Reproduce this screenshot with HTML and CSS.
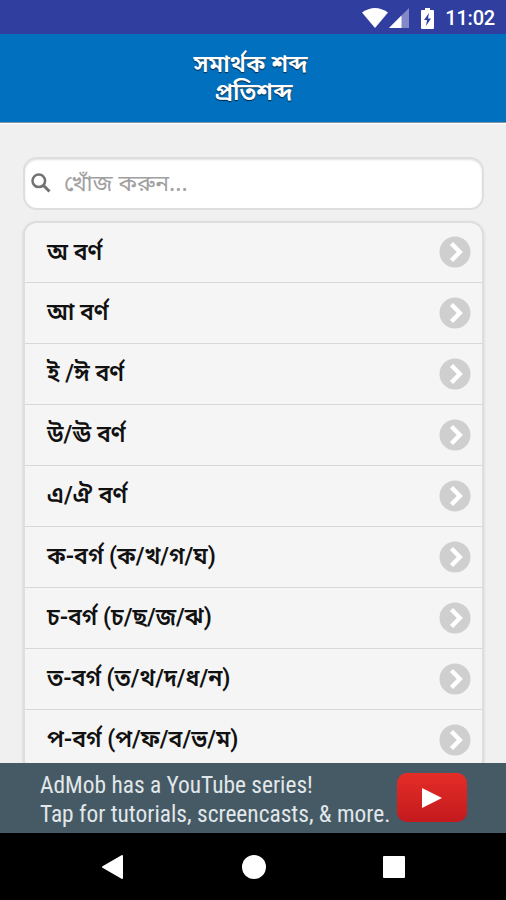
FILE: index.html
```html
<!DOCTYPE html>
<html lang="bn">
<head>
  <meta charset="utf-8">
  <title>সমার্থক শব্দ প্রতিশব্দ</title>
  <link rel="stylesheet" href="styles.css">
</head>
<body>
  <svg class="defs" width="0" height="0">
    <symbol id="arrow" viewBox="0 0 32 32">
      <circle cx="16" cy="16" r="15.5" fill="#cfcfcf"/>
      <path d="M12.5 7.5l8.3 8.500-8.3 8.500" fill="none" stroke="#fff" stroke-width="4.4"/>
    </symbol>
  </svg>

  <div class="status">
    <svg class="wifi" width="26" height="20" viewBox="0 0 26 20">
      <path d="M0 4.5Q13-4.5 26 4.5L13 20z" fill="#fff"/>
    </svg>
    <svg class="signal" width="20" height="20" viewBox="0 0 20 20">
      <path d="M20 0v20H0z" fill="#8189c6"/>
      <path d="M12.5 7.5V20H0z" fill="#fff"/>
    </svg>
    <svg class="battery" width="13" height="21" viewBox="0 0 13 21">
      <path d="M4 0h5v2h3q1 0 1 1v17q0 1-1 1H1q-1 0-1-1V3q0-1 1-1h3z" fill="#fff"/>
      <path d="M8 5l-5 7h3l-1 6 5-7.5H7z" fill="#303f9f"/>
    </svg>
    <span class="time">11:02</span>
  </div>

  <header class="header">
    <h1><span>সমার্থক শব্দ</span><span>প্রতিশব্দ</span></h1>
  </header>

  <main class="content">
    <div class="search">
      <svg width="20" height="20" viewBox="0 0 20 20" fill="none" stroke="#727272">
        <circle cx="7.8" cy="7.8" r="6.3" stroke-width="2.5"/>
        <path d="M12 12l6.5 6.5" stroke-width="3"/>
      </svg>
      <span>খোঁজ করুন...</span>
    </div>

    <ul class="list">
      <li><span>অ বর্ণ</span><svg><use href="#arrow"/></svg></li>
      <li><span>আ বর্ণ</span><svg><use href="#arrow"/></svg></li>
      <li><span>ই /ঈ বর্ণ</span><svg><use href="#arrow"/></svg></li>
      <li><span>উ/ঊ বর্ণ</span><svg><use href="#arrow"/></svg></li>
      <li><span>এ/ঐ বর্ণ</span><svg><use href="#arrow"/></svg></li>
      <li><span>ক-বর্গ (ক/খ/গ/ঘ)</span><svg><use href="#arrow"/></svg></li>
      <li><span>চ-বর্গ (চ/ছ/জ/ঝ)</span><svg><use href="#arrow"/></svg></li>
      <li><span>ত-বর্গ (ত/থ/দ/ধ/ন)</span><svg><use href="#arrow"/></svg></li>
      <li><span>প-বর্গ (প/ফ/ব/ভ/ম)</span><svg><use href="#arrow"/></svg></li>
    </ul>
  </main>

  <div class="ad">
    <p><span>AdMob has a YouTube series!</span><span>Tap for tutorials, screencasts, &amp; more.</span></p>
    <div class="play">
      <svg width="20" height="20" viewBox="0 0 20 20"><path d="M0 0l20 10L0 20z" fill="#fff"/></svg>
    </div>
  </div>

  <nav class="nav">
    <svg width="22" height="24" viewBox="0 0 22 24"><path d="M20 1v22L1 12z" fill="#fff" stroke="#fff" stroke-width="2" stroke-linejoin="round"/></svg>
    <svg width="24" height="24" viewBox="0 0 24 24"><circle cx="12" cy="12" r="12" fill="#fff"/></svg>
    <svg width="22" height="22" viewBox="0 0 22 22"><rect width="22" height="22" rx="1" fill="#fff"/></svg>
  </nav>
</body>
</html>
```
FILE: styles.css
```css
body {
  margin: 0;
  height: 900px;
  display: flex;
  flex-direction: column;
  overflow: hidden;
  background-color: #f0f0f0;
  font-family: "Noto Sans Bengali", "Noto Sans", sans-serif;
}

.defs {
  display: none;
}

.status {
  height: 34px;
  box-sizing: border-box;
  display: flex;
  align-items: center;
  justify-content: flex-end;
  padding: 2px 11px 0 0;
  background-color: #303f9f;
  color: #fff;
  font-family: Roboto, sans-serif;
  font-size: 20px;
  font-weight: 500;
}

.time {
  letter-spacing: -0.2px;
}

.signal {
  margin-left: 1px;
}

.battery {
  margin: 0 11px 0 12px;
}

.header {
  height: 89px;
  box-sizing: border-box;
  background-color: #0070bf;
  border-bottom: 1px solid #8797a5;
  box-shadow: 0 1px 1px #fff;
  flex-shrink: 0;
}

h1 {
  margin: 0;
  padding: 18px 5px 0 0;
  text-align: center;
  color: #fff;
  font-size: 23.8px;
  font-weight: 600;
  line-height: 28px;
  text-shadow: 0 1px 1px rgba(0, 0, 0, 0.7);
}

h1 span {
  display: block;
}

h1 span:last-child {
  padding-left: 6px;
}

.content {
  flex: 1;
  min-height: 0;
  overflow: hidden;
  padding: 34px 22px 0 23px;
}

.search {
  height: 53px;
  box-sizing: border-box;
  display: flex;
  align-items: center;
  padding: 0 0 1px 6px;
  background-color: #fff;
  border: 2px solid #dedede;
  border-radius: 14px;
  box-shadow: inset 0 1px 2px rgba(0, 0, 0, 0.12);
  color: #a0a0a0;
  font-size: 23px;
}

.search span {
  margin-left: 13px;
  padding-top: 3px;
}

.list {
  list-style: none;
  margin: 11px 0 0;
  padding: 0;
  background-color: #f5f5f5;
  border: 2px solid #dedede;
  border-radius: 14px;
  box-shadow: 0 1px 3px rgba(0, 0, 0, 0.12);
}

.list li {
  height: 61px;
  box-sizing: border-box;
  display: flex;
  align-items: center;
  justify-content: space-between;
  padding: 0 11px 1px 22px;
  border-bottom: 1px solid #d8d8d8;
  color: #111;
  font-family: Roboto, "Noto Sans Bengali", sans-serif;
  font-size: 23px;
  font-weight: 600;
}

.list li:first-child {
  height: 60px;
}

.list span {
  padding-top: 3px;
}

.list svg {
  width: 32px;
  height: 32px;
}

.ad {
  height: 70px;
  flex-shrink: 0;
  display: flex;
  align-items: center;
  justify-content: space-between;
  padding: 0 39px 0 40px;
  background-color: #455a64;
  color: #e1e7ea;
  font-family: Roboto, sans-serif;
  font-size: 23.4px;
  font-stretch: 75%;
  line-height: 29px;
}

.ad p {
  margin: 0;
  padding-top: 3px;
  white-space: nowrap;
}

.ad p span {
  display: block;
}

.play {
  width: 70px;
  height: 49px;
  margin-bottom: 1px;
  display: flex;
  align-items: center;
  justify-content: center;
  background: linear-gradient(#e52d27, #c31a1e);
  border-radius: 10px;
}

.nav {
  height: 67px;
  flex-shrink: 0;
  display: flex;
  align-items: center;
  justify-content: space-between;
  box-sizing: border-box;
  padding: 0 101px 0 102px;
  background-color: #000;
}
```
